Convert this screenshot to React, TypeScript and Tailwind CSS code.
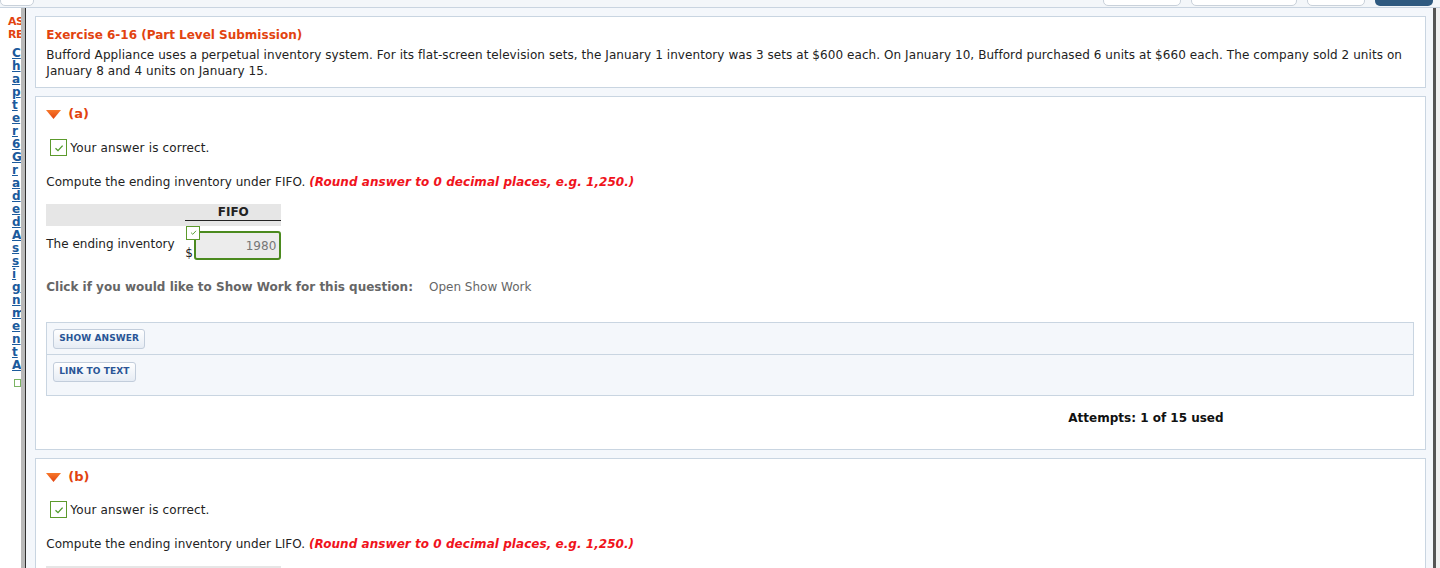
const sideLetters = 'Chapter6GradedAssignmentA'.split('');

function Triangle() {
  return (
    <svg width="15" height="9" viewBox="0 0 15 9" className="shrink-0">
      <defs>
        <linearGradient id="tri" x1="0" y1="0" x2="0" y2="1">
          <stop offset="0" stopColor="#f7782a" />
          <stop offset="1" stopColor="#e2430f" />
        </linearGradient>
      </defs>
      <polygon points="0,0 15,0 7.5,9" fill="url(#tri)" />
    </svg>
  );
}

function CheckBox({ size = 17 }: { size?: number }) {
  return (
    <span
      className="inline-flex items-center justify-center border border-[#5c9a2c] bg-white shrink-0"
      style={{ width: size, height: size }}
    >
      <svg width={size - 7} height={size - 7} viewBox="0 0 10 10">
        <path d="M1.5 5.2 L4 7.6 L8.6 2.6" fill="none" stroke="#4f9a2a" strokeWidth="1.3" />
      </svg>
    </span>
  );
}

function PartHeader({ label }: { label: string }) {
  return (
    <div className="flex items-center gap-[7px] h-[16px]">
      <Triangle />
      <span className="font-bold text-[13px] text-[#e2430f]">{label}</span>
    </div>
  );
}

function Correct() {
  return (
    <div className="flex items-center gap-[3px] ml-[4px] h-[17px]">
      <CheckBox />
      <span className="text-[#222] tracking-[0.15px]">Your answer is correct.</span>
    </div>
  );
}

function Compute({ method }: { method: string }) {
  return (
    <div className="h-[16px] leading-[16px] text-[#222] tracking-[0.05px]">
      Compute the ending inventory under {method}.{' '}
      <span className="font-bold italic text-[#f0131c]">(Round answer to 0 decimal places, e.g. 1,250.)</span>
    </div>
  );
}

function Btn({ children }: { children: string }) {
  return (
    <button className="h-[20px] px-[5px] rounded-[3px] border border-[#c2cddb] bg-gradient-to-b from-white to-[#e6ecf4] text-[9px] font-bold text-[#2a5596] tracking-[0.1px]">
      {children}
    </button>
  );
}

export default function App() {
  return (
    <div className="h-[568px] overflow-hidden bg-white font-['DejaVu_Sans','Verdana',sans-serif] text-[12px] text-[#222]">
      {/* top toolbar, mostly scrolled out */}
      <div className="h-[8px] flex items-end overflow-hidden bg-[#f3f6f9] border-b border-[#c9d4e0]">
        <div className="w-[34px] h-[20px] rounded-b-[5px] border border-[#c9d1da] bg-white mb-[1px]" />
        <div className="flex-1" />
        <div className="flex gap-[10px] mr-[11px] mb-[1px]">
          <div className="w-[78px] h-[20px] rounded-b-[5px] border border-[#c9d1da] bg-white" />
          <div className="w-[106px] h-[20px] rounded-b-[5px] border border-[#c9d1da] bg-white" />
          <div className="w-[58px] h-[20px] rounded-b-[5px] border border-[#c9d1da] bg-white" />
          <div className="w-[58px] h-[20px] rounded-b-[5px] bg-[#2f5a80] mr-[-4px]" />
        </div>
      </div>

      <div className="flex h-[560px]">
        {/* left sidebar */}
        <div className="w-[22px] overflow-hidden pl-[8px] pt-[7px] bg-white">
          <div className="font-bold text-[11px] leading-[13px] text-[#e2430f] whitespace-nowrap tracking-[-0.5px]">AS</div>
          <div className="font-bold text-[11px] leading-[13px] text-[#e2430f] whitespace-nowrap tracking-[-0.5px]">RE</div>
          <div className="mt-[6px] pl-[4px]">
            {sideLetters.map((l, i) => (
              <div key={i} className="font-bold text-[12px] leading-[13px] h-[13px] text-[#1b5a9c] underline">
                {l}
              </div>
            ))}
          </div>
          <div className="ml-[6px] mt-[7px] w-[7px] h-[8px] border border-[#7bb463]" />
        </div>
        <div className="w-[4px] bg-[#b9b9b9]" />
        <div className="w-[1px] bg-[#2f2f2f]" />

        {/* main content */}
        <div className="flex-1 bg-[#f4f7fb] pt-[8px] pl-[9px] pr-[7px]">
          <div className="flex flex-col gap-[8px] w-[1391px]">
            {/* exercise card */}
            <div className="bg-white border border-[#c9d5e1] px-[10px] pt-[10px] pb-[8px]">
              <div className="font-bold text-[12px] leading-[16px] text-[#e2430f]">Exercise 6-16 (Part Level Submission)</div>
              <p className="leading-[16px] mt-[4px] tracking-[0.07px]">
                Bufford Appliance uses a perpetual inventory system. For its flat-screen television sets, the January 1 inventory was 3 sets at $600 each. On January 10, Bufford purchased 6 units at $660 each. The company sold 2 units on January 8 and 4 units on January 15.
              </p>
            </div>

            {/* part a */}
            <div className="bg-white border border-[#c9d5e1] px-[10px] pt-[9px] h-[354px]">
              <PartHeader label="(a)" />
              <div className="mt-[17px]">
                <Correct />
              </div>
              <div className="mt-[18px]">
                <Compute method="FIFO" />
              </div>

              {/* table */}
              <div className="mt-[14px] w-[235px]">
                <div className="flex h-[22px] bg-[#e6e6e6]">
                  <div className="w-[139px]" />
                  <div className="w-[96px] relative">
                    <div className="text-center font-bold text-[12px] leading-[14px] mt-[1px]">FIFO</div>
                    <div className="absolute left-0 right-0 top-[16px] h-[1px] bg-[#222]" />
                  </div>
                </div>
                <div className="flex items-end h-[34px]">
                  <div className="w-[139px] self-center pt-[2px]">The ending inventory</div>
                  <div className="w-[96px] relative flex items-end">
                    <span className="text-[12px] leading-[12px] mb-[1px] w-[9px]">$</span>
                    <div className="absolute left-[1px] top-[-8px]">
                      <CheckBox size={14} />
                    </div>
                    <div className="w-[87px] h-[29px] rounded-[3px] border-2 border-[#4b8a1f] bg-[#ececec] flex items-center justify-end pr-[3px] text-[#777]">
                      1980
                    </div>
                  </div>
                </div>
              </div>

              <div className="mt-[19px] flex h-[16px] items-center text-[#666]">
                <span className="font-bold">Click if you would like to Show Work for this question:</span>
                <span className="ml-[16px]">Open Show Work</span>
              </div>

              <div className="mt-[27px] w-[1368px] border border-[#c9d5e1] bg-[#f4f7fb]">
                <div className="h-[32px] flex items-center pl-[6px] pt-[1px] border-b border-[#c9d5e1]">
                  <Btn>SHOW ANSWER</Btn>
                </div>
                <div className="h-[40px] pl-[6px] pt-[6px]">
                  <Btn>LINK TO TEXT</Btn>
                </div>
              </div>

              <div className="mt-[14px] pl-[1022px] font-bold text-[#111] leading-[16px]">Attempts: 1 of 15 used</div>
            </div>

            {/* part b */}
            <div className="bg-white border border-[#c9d5e1] px-[10px] pt-[10px] h-[200px]">
              <PartHeader label="(b)" />
              <div className="mt-[16px]">
                <Correct />
              </div>
              <div className="mt-[18px]">
                <Compute method="LIFO" />
              </div>
              <div className="mt-[14px] w-[235px] h-[22px] bg-[#e6e6e6]" />
            </div>
          </div>
        </div>
        <div className="w-[3px] bg-[#555]" />
        <div className="w-[4px] bg-[#f0f0f0]" />
      </div>
    </div>
  );
}
